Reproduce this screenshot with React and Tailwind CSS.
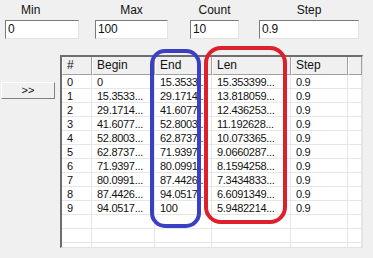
import React from "react";

const rows = [
  ["0", "0", "15.3533...", "15.353399...", "0.9"],
  ["1", "15.3533...", "29.1714...", "13.818059...", "0.9"],
  ["2", "29.1714...", "41.6077...", "12.436253...", "0.9"],
  ["3", "41.6077...", "52.8003...", "11.192628...", "0.9"],
  ["4", "52.8003...", "62.8737...", "10.073365...", "0.9"],
  ["5", "62.8737...", "71.9397...", "9.0660287...", "0.9"],
  ["6", "71.9397...", "80.0991...", "8.1594258...", "0.9"],
  ["7", "80.0991...", "87.4426...", "7.3434833...", "0.9"],
  ["8", "87.4426...", "94.0517...", "6.6091349...", "0.9"],
  ["9", "94.0517...", "100", "5.9482214...", "0.9"],
  ["", "", "", "", ""],
  ["", "", "", "", ""],
  ["", "", "", "", ""],
];

const cols = ["w-[30px]", "w-[63px]", "w-[57px]", "w-[79px]", "w-[57px]"];
const heads = ["#", "Begin", "End", "Len", "Step"];

function Field({ label, value, width, labelClass }) {
  return (
    <div className="flex flex-col">
      <div className={`h-[20px] pt-[3px] text-[12px] leading-[14px] ${labelClass}`}>{label}</div>
      <div
        className={`${width} h-[19px] bg-white border-t border-l border-t-[#7a7a7a] border-l-[#7a7a7a] border-r border-b border-r-[#e3e3e3] border-b-[#e3e3e3] px-[2px] text-[12px] leading-[17px] tracking-[-0.2px]`}
      >
        {value}
      </div>
    </div>
  );
}

export default function App() {
  return (
    <div
      className="relative w-[373px] h-[258px] overflow-hidden bg-[#f0f0f0] text-[#111]"
      style={{ fontFamily: '"Liberation Sans", Arial, sans-serif' }}
    >
      {/* top fields */}
      <div className="flex pl-[5px]">
        <Field label="Min" value="0" width="w-[74px]" labelClass="pl-[16px]" />
        <div className="w-[16px]" />
        <Field label="Max" value="100" width="w-[73px]" labelClass="text-center" />
        <div className="w-[22px]" />
        <Field label="Count" value="10" width="w-[49px]" labelClass="text-center" />
        <div className="w-[20px]" />
        <Field label="Step" value="0.9" width="w-[100px]" labelClass="text-center" />
      </div>

      <div className="flex mt-[16px]">
        <div className="pt-[22px] pl-[1px]">
          <button className="w-[54px] h-[17px] bg-[#f0f0f0] border-t border-l border-t-white border-l-white border-r border-b border-r-[#808080] border-b-[#808080] text-[11px] leading-[14px] text-center">
            &gt;&gt;
          </button>
        </div>
        <div className="ml-[5px] w-[303px] h-[193px] border-t-2 border-l-2 border-t-[#6d6d6d] border-l-[#6d6d6d] border-r border-b border-r-[#e3e3e3] border-b-[#e3e3e3] bg-white overflow-hidden">
          <div className="flex h-[18px] bg-[#f0f0f0]">
            {heads.map((h, i) => (
              <div
                key={h}
                className={`${cols[i]} shrink-0 border-r border-r-[#a0a0a0] border-b border-b-[#a0a0a0] border-l border-l-white pl-[4px] text-[12px] leading-[17px]`}
              >
                {h}
              </div>
            ))}
            <div className="flex-1 border-b border-b-[#a0a0a0] border-r border-r-[#a0a0a0] border-l border-l-white" />
          </div>
          {rows.map((r, ri) => (
            <div key={ri} className="flex h-[14px]">
              {r.map((c, ci) => (
                <div
                  key={ci}
                  className={`${cols[ci]} shrink-0 border-r border-b border-[#e6e6e6] pl-[5px] text-[11px] leading-[14px] tracking-[-0.3px] whitespace-nowrap overflow-hidden`}
                >
                  {c}
                </div>
              ))}
              <div className="flex-1 border-r border-b border-[#e6e6e6]" />
            </div>
          ))}
        </div>
      </div>

      {/* highlight marks */}
      <div className="absolute left-[150px] top-[49px] w-[51px] h-[179px] border-4 border-[#3b3fc4] rounded-[15px]" />
      <div className="absolute left-[204px] top-[46px] w-[83px] h-[178px] border-4 border-[#de1f2c] rounded-[17px]" />
    </div>
  );
}
